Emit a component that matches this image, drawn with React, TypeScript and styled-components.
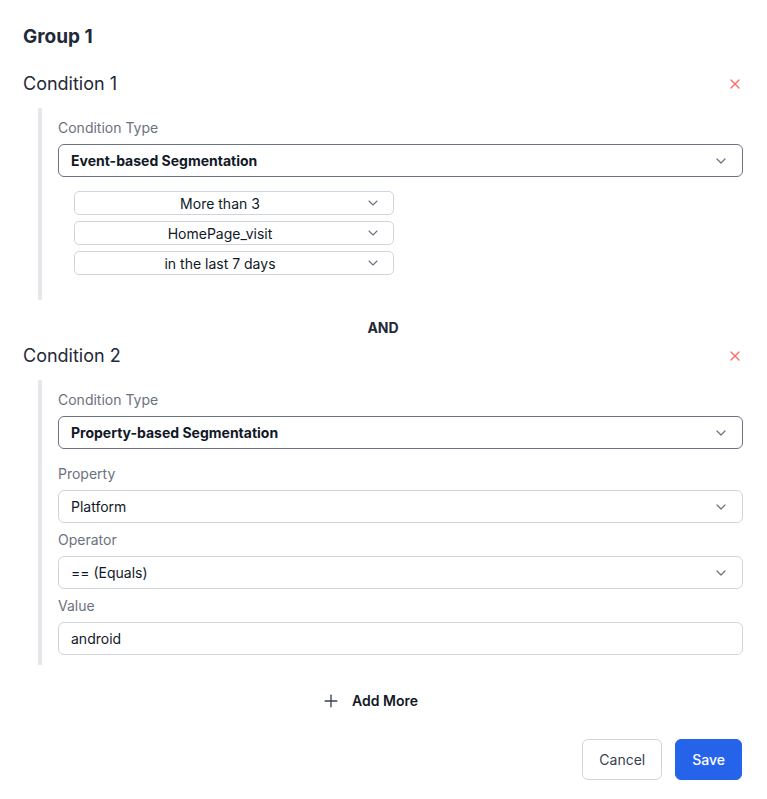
import React, { useState } from "react";
import styled, { createGlobalStyle } from "styled-components";
import { ChevronDown, X, Plus } from "lucide-react";

const GlobalStyle = createGlobalStyle`
  * { box-sizing: border-box; }
  body {
    margin: 0;
    background: #ffffff;
    font-family: Inter, "Noto Sans", "Liberation Sans", sans-serif;
    color: #111827;
  }
`;

const Page = styled.div`
  width: 767px;
  padding: 23px 24px 20px 23px;
  display: flex;
  flex-direction: column;
`;

const GroupTitle = styled.h2`
  margin: 0 0 19px;
  font-size: 19px;
  line-height: 28px;
  font-weight: 700;
  color: #1f2937;
`;

const ConditionHeader = styled.div`
  display: flex;
  align-items: center;
  justify-content: space-between;
  height: 28px;
  margin-bottom: 10px;
`;

const ConditionTitle = styled.span`
  font-size: 18px;
  line-height: 28px;
  color: #1f2937;
`;

const RemoveBtn = styled.button`
  border: none;
  background: none;
  padding: 0;
  display: flex;
  color: #f87171;
  cursor: pointer;
`;

const Body = styled.div`
  margin-left: 15px;
  border-left: 4px solid #e5e7eb;
  padding: 10px 0 10px 16px;
  display: flex;
  flex-direction: column;
`;

const Field = styled.div<{ $spaced?: boolean }>`
  display: flex;
  flex-direction: column;
  margin-top: ${(p) => (p.$spaced ? "15px" : "7px")};
  &:first-child {
    margin-top: 0;
  }
`;

const Label = styled.label`
  font-size: 14px;
  line-height: 20px;
  color: #6b7280;
  margin-bottom: 6px;
`;

const SelectBox = styled.div<{ $strong?: boolean }>`
  height: 33px;
  display: flex;
  align-items: center;
  justify-content: space-between;
  padding: 0 13px 0 12px;
  border: 1px solid ${(p) => (p.$strong ? "#6b7280" : "#d1d5db")};
  border-radius: 6px;
  font-size: 14px;
  font-weight: ${(p) => (p.$strong ? 700 : 400)};
  color: #111827;
  background: #fff;
  cursor: pointer;
  svg {
    color: #6b7280;
  }
`;

const TextInput = styled.input`
  height: 33px;
  padding: 0 12px;
  border: 1px solid #d1d5db;
  border-radius: 6px;
  font-family: inherit;
  font-size: 14px;
  color: #111827;
  outline: none;
`;

const EventRules = styled.div`
  margin: 14px 0 15px 16px;
  width: 320px;
  display: flex;
  flex-direction: column;
  gap: 6px;
`;

const SmallSelect = styled.div`
  height: 24px;
  position: relative;
  display: flex;
  align-items: center;
  justify-content: center;
  padding-right: 28px;
  border: 1px solid #d1d5db;
  border-radius: 5px;
  font-size: 14px;
  color: #111827;
  cursor: pointer;
  svg {
    position: absolute;
    right: 12px;
    color: #6b7280;
  }
`;

const AndText = styled.div`
  text-align: center;
  font-size: 14px;
  line-height: 20px;
  font-weight: 700;
  color: #1f2937;
  margin: 18px 0 4px;
`;

const AddRow = styled.div`
  display: flex;
  justify-content: center;
  margin-top: 26px;
`;

const AddBtn = styled.button`
  display: flex;
  align-items: center;
  gap: 11px;
  border: none;
  background: none;
  padding: 0 27px 0 0;
  font-family: inherit;
  font-size: 14px;
  line-height: 20px;
  font-weight: 600;
  color: #111827;
  cursor: pointer;
  svg {
    color: #374151;
  }
`;

const Footer = styled.div`
  display: flex;
  justify-content: flex-end;
  gap: 13px;
  margin-top: 28px;
  padding-right: 1px;
`;

const Button = styled.button<{ $primary?: boolean }>`
  height: 41px;
  padding: 0 16px;
  border-radius: 6px;
  font-family: inherit;
  font-size: 14px;
  font-weight: ${(p) => (p.$primary ? 500 : 400)};
  border: 1px solid ${(p) => (p.$primary ? "#2563eb" : "#d1d5db")};
  background: ${(p) => (p.$primary ? "#2563eb" : "#ffffff")};
  color: ${(p) => (p.$primary ? "#ffffff" : "#374151")};
  cursor: pointer;
`;

function Select({ value, strong }: { value: string; strong?: boolean }) {
  return (
    <SelectBox $strong={strong}>
      <span>{value}</span>
      <ChevronDown size={16} strokeWidth={1.8} />
    </SelectBox>
  );
}

const eventRules = ["More than 3", "HomePage_visit", "in the last 7 days"];

export default function App() {
  const [value, setValue] = useState("android");

  return (
    <>
      <GlobalStyle />
      <Page>
        <GroupTitle>Group 1</GroupTitle>

        <ConditionHeader>
          <ConditionTitle>Condition 1</ConditionTitle>
          <RemoveBtn aria-label="Remove condition">
            <X size={16} strokeWidth={2.2} />
          </RemoveBtn>
        </ConditionHeader>
        <Body>
          <Field>
            <Label>Condition Type</Label>
            <Select value="Event-based Segmentation" strong />
          </Field>
          <EventRules>
            {eventRules.map((r) => (
              <SmallSelect key={r}>
                {r}
                <ChevronDown size={16} strokeWidth={1.6} />
              </SmallSelect>
            ))}
          </EventRules>
        </Body>

        <AndText>AND</AndText>

        <ConditionHeader>
          <ConditionTitle>Condition 2</ConditionTitle>
          <RemoveBtn aria-label="Remove condition">
            <X size={16} strokeWidth={2.2} />
          </RemoveBtn>
        </ConditionHeader>
        <Body>
          <Field>
            <Label>Condition Type</Label>
            <Select value="Property-based Segmentation" strong />
          </Field>
          <Field $spaced>
            <Label>Property</Label>
            <Select value="Platform" />
          </Field>
          <Field>
            <Label>Operator</Label>
            <Select value="== (Equals)" />
          </Field>
          <Field>
            <Label>Value</Label>
            <TextInput
              value={value}
              onChange={(e) => setValue(e.target.value)}
            />
          </Field>
        </Body>

        <AddRow>
          <AddBtn>
            <Plus size={20} strokeWidth={1.6} />
            Add More
          </AddBtn>
        </AddRow>

        <Footer>
          <Button>Cancel</Button>
          <Button $primary>Save</Button>
        </Footer>
      </Page>
    </>
  );
}
